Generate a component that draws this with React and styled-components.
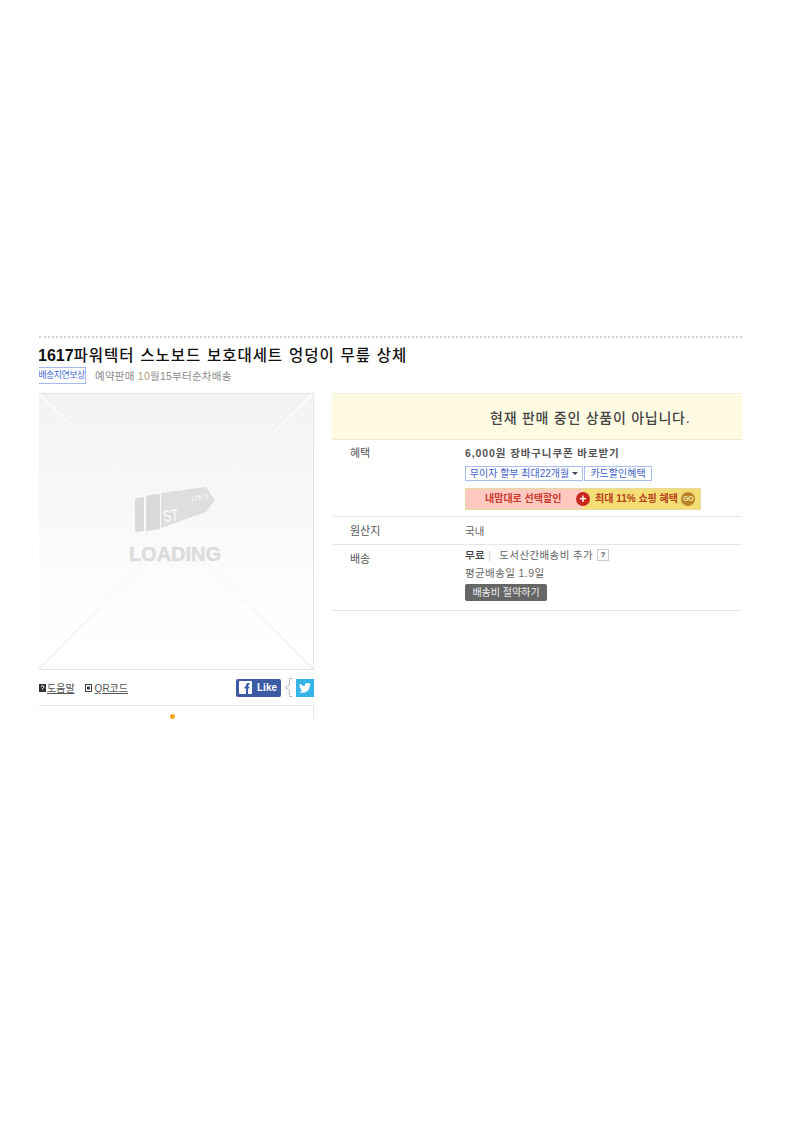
import React from 'react';
import styled, { createGlobalStyle } from 'styled-components';

const GlobalStyle = createGlobalStyle`
  html, body {
    margin: 0;
    padding: 0;
    background: #fff;
  }
  body {
    font-family: "Liberation Sans", "Noto Sans CJK KR", sans-serif;
    color: #555;
  }
`;

const Page = styled.div`
  width: 793px;
  height: 1122px;
  padding: 336px 51px 0 39px;
  box-sizing: border-box;
`;

const Frame = styled.div`
  width: 703px;
  height: 383px;
  overflow: hidden;
  border-top: 2px dotted #d0d0d0;
  box-sizing: border-box;
`;

const Title = styled.h1`
  margin: 7px 0 0 -1px;
  font-family: "DejaVu Sans", "Noto Sans CJK KR", sans-serif;
  font-size: 15.5px;
  line-height: 21px;
  font-weight: 500;
  color: #111;
  white-space: nowrap;
  letter-spacing: 0.95px;

  b {
    font-family: "Liberation Sans", sans-serif;
    font-weight: 700;
    font-size: 16px;
    letter-spacing: 0;
  }
`;

const SubRow = styled.div`
  display: flex;
  align-items: center;
  gap: 9px;
  margin-top: 0;
  height: 16px;
`;

const DelayBadge = styled.span`
  display: block;
  width: 47px;
  height: 15px;
  margin-left: -1px;
  border: 1px solid #a9b9ee;
  border-left: 0;
  font-size: 9px;
  line-height: 15px;
  text-align: center;
  color: #4a6bd8;
  white-space: nowrap;
  letter-spacing: -0.5px;
`;

const PreOrder = styled.span`
  font-size: 10.5px;
  color: #8a8a8a;
  white-space: nowrap;
  letter-spacing: 0.25px;

  em {
    font-style: normal;
    color: #b59a7c;
  }
`;

const Columns = styled.div`
  display: flex;
  align-items: flex-start;
  gap: 18px;
  margin-top: 10px;
`;

const LeftColumn = styled.div`
  width: 275px;
  flex: none;
`;

const RightColumn = styled.div`
  flex: 1;
  min-width: 0;
`;

const ImageBox = styled.div`
  position: relative;
  height: 277px;
  border: 1px solid #e4e4e4;
  border-left: 0;
  box-sizing: border-box;
  background: linear-gradient(180deg, #f3f3f3 0%, #f7f7f7 35%, #fdfdfd 75%, #fff 100%);
`;

const Cross = styled.svg`
  position: absolute;
  inset: 0;
  width: 100%;
  height: 100%;
`;

const LogoWrap = styled.div`
  position: absolute;
  left: 95px;
  top: 93px;
  width: 82px;
  display: flex;
  flex-direction: column;
  align-items: center;
`;

const LoadingText = styled.div`
  margin-top: 10px;
  font-family: "Liberation Sans", sans-serif;
  font-size: 20px;
  line-height: 22px;
  font-weight: 700;
  letter-spacing: 0;
  color: #dcdcdc;
  -webkit-text-stroke: 0.5px #dcdcdc;
  white-space: nowrap;
`;

const ToolRow = styled.div`
  display: flex;
  align-items: center;
  height: 35px;
`;

const ToolLink = styled.a`
  display: flex;
  align-items: center;
  gap: ${p => p.$gap}px;
  margin-right: 10px;
  font-size: 10px;
  color: #555;
  text-decoration: underline;
  white-space: nowrap;
`;

const ToolIcon = styled.svg`
  width: 7px;
  height: 8px;
  flex: none;
`;

const Social = styled.div`
  display: flex;
  align-items: center;
  margin-left: auto;
`;

const LikeButton = styled.div`
  display: flex;
  align-items: center;
  gap: 5px;
  width: 45px;
  height: 18px;
  padding-left: 3px;
  box-sizing: border-box;
  border-radius: 2px;
  background: #3b5ba5;
  color: #fff;
  font-size: 10px;
  font-weight: 700;
`;

const Bracket = styled.svg`
  width: 9px;
  height: 19px;
  margin: 0 3px;
  flex: none;
`;

const TweetButton = styled.div`
  display: flex;
  align-items: center;
  justify-content: center;
  width: 18px;
  height: 18px;
  background: #36b4e8;
`;

const NextBox = styled.div`
  position: relative;
  height: 30px;
  margin-top: 0;
  border-top: 1px solid #e6e6e6;
  border-right: 1px solid #e6e6e6;
`;

const OrangeDot = styled.span`
  position: absolute;
  left: 131px;
  top: 8px;
  width: 5px;
  height: 5px;
  border-radius: 50%;
  background: #f5a623;
`;

const Notice = styled.div`
  display: flex;
  align-items: center;
  height: 47px;
  padding-left: 158px;
  box-sizing: border-box;
  background: #fffbe3;
  border-top: 1px solid #f1eedd;
  border-bottom: 1px solid #efe9cf;
  font-size: 14px;
  font-weight: 500;
  color: #444;
  letter-spacing: 0.75px;
  white-space: nowrap;
`;

const InfoRow = styled.div`
  display: flex;
  padding: ${p => p.$pad};
  border-bottom: 1px solid #e6e6e6;
`;

const InfoLabel = styled.div`
  width: 133px;
  padding-left: 18px;
  padding-top: ${p => p.$top || 0}px;
  box-sizing: border-box;
  flex: none;
  font-size: 11px;
  line-height: 14px;
  color: #555;
`;

const InfoValue = styled.div`
  flex: 1;
  min-width: 0;
  font-size: 10.5px;
  line-height: 14px;
  color: #666;
`;

const CouponLine = styled.div`
  font-size: 10.5px;
  line-height: 14px;
  font-weight: 700;
  color: #555;
  letter-spacing: 0.9px;
`;

const BenefitButtons = styled.div`
  display: flex;
  gap: 1px;
  margin-top: 6px;
`;

const BenefitButton = styled.span`
  display: flex;
  align-items: center;
  justify-content: center;
  gap: 3px;
  width: ${p => p.$w}px;
  height: 15px;
  box-sizing: border-box;
  border: 1px solid #aebdf0;
  font-size: 10px;
  color: #3f62c8;
  white-space: nowrap;
`;

const Caret = styled.i`
  width: 0;
  height: 0;
  border: 3px solid transparent;
  border-top: 3px solid #445;
  border-bottom: 0;
`;

const PromoBanner = styled.div`
  position: relative;
  display: flex;
  width: 236px;
  height: 22px;
  margin-top: 7px;
  box-sizing: border-box;
  border: 1px solid #e5d9a0;
  font-size: 10px;
  font-weight: 700;
  line-height: 20px;
  color: #c8392c;
  white-space: nowrap;
`;

const PromoLeft = styled.div`
  width: 117px;
  padding-left: 19px;
  box-sizing: border-box;
  background: #ffc9c0;
`;

const PromoRight = styled.div`
  display: flex;
  align-items: center;
  gap: 3px;
  flex: 1;
  padding-left: 12px;
  background: #f3dd74;
  color: #b5401c;
`;

const PlusBadge = styled.span`
  position: absolute;
  left: 110px;
  top: 3px;
  display: flex;
  align-items: center;
  justify-content: center;
  width: 14px;
  height: 14px;
  border-radius: 50%;
  background: #c9261f;
  color: #fff;
  font-size: 12px;
  line-height: 14px;
`;

const GoBadge = styled.span`
  display: flex;
  align-items: center;
  justify-content: center;
  width: 14px;
  height: 14px;
  border-radius: 50%;
  background: #b98428;
  color: #f9e9a8;
  font-size: 7px;
  letter-spacing: -0.5px;
`;

const ShipLine = styled.div`
  display: flex;
  align-items: center;
  margin-top: ${p => p.$top || 0}px;
  white-space: nowrap;
  letter-spacing: 0.4px;

  strong {
    font-weight: 500;
    color: #444;
  }
`;

const Sep = styled.span`
  margin: 0 8px 0 3px;
  color: #ccc;
`;

const HelpBox = styled.span`
  display: flex;
  align-items: center;
  justify-content: center;
  width: 10px;
  height: 10px;
  margin-left: 4px;
  border: 1px solid #ccc;
  font-size: 8px;
  font-weight: 700;
  color: #444;
`;

const SaveButton = styled.span`
  display: block;
  width: 82px;
  height: 17px;
  margin-top: 4px;
  border-radius: 2px;
  background: #666;
  color: #eee;
  font-size: 10px;
  line-height: 17px;
  text-align: center;
  white-space: nowrap;
`;

const Logo = () => (
  <svg width="82" height="46" viewBox="0 0 82 46" aria-hidden="true">
    <path d="M1 14q0-3 3-3l6-1v34l-6 1q-3 .5-3-2z" fill="#dadada" />
    <path d="M12 10l3-2 9-1q2 0 2 2v33l-14 2z" fill="#d9d9d9" />
    <path d="M27 6L72 0l9 13-9 12-45 16z" fill="#dedede" />
    <text x="30" y="35" fontFamily="Liberation Sans" fontSize="16" fill="#fff" textLength="15" lengthAdjust="spacingAndGlyphs" transform="rotate(-8 30 35)">ST</text>
    <text x="57" y="14" fontFamily="Noto Sans CJK KR" fontSize="6" fill="#fff" transform="rotate(-8 57 14)">11번가</text>
  </svg>
);

const App = () => (
  <Page>
    <GlobalStyle />
    <Frame>
      <Title><b>1617</b>파워텍터 스노보드 보호대세트 엉덩이 무릎 상체</Title>
      <SubRow>
        <DelayBadge>배송지연보상</DelayBadge>
        <PreOrder>예약판매 <em>10</em>월15부터순차배송</PreOrder>
      </SubRow>
      <Columns>
        <LeftColumn>
          <ImageBox>
            <Cross viewBox="0 0 275 277" preserveAspectRatio="none" aria-hidden="true">
              <defs>
                <linearGradient id="crossStroke" x1="0" y1="0" x2="0" y2="1">
                  <stop offset="0" stopColor="#fdfdfd" />
                  <stop offset="0.55" stopColor="#fafafa" />
                  <stop offset="1" stopColor="#efefef" />
                </linearGradient>
              </defs>
              <path d="M0 0L137 138L0 277L137 138L275 277L137 138L275 0L137 138z" stroke="url(#crossStroke)" strokeWidth="1.5" fill="none" />
            </Cross>
            <LogoWrap>
              <Logo />
              <LoadingText>LOADING</LoadingText>
            </LogoWrap>
          </ImageBox>
          <ToolRow>
            <ToolLink $gap={1}>
              <ToolIcon viewBox="0 0 7 8" aria-hidden="true">
                <rect width="7" height="8" fill="#333" />
                <path d="M2 2.500q1.500-1.500 3 0q0 1.500-1.500 2v1" stroke="#fff" fill="none" />
              </ToolIcon>
              도움말
            </ToolLink>
            <ToolLink $gap={3}>
              <ToolIcon viewBox="0 0 7 8" aria-hidden="true">
                <rect x=".5" y=".5" width="6" height="7" fill="none" stroke="#444" />
                <rect x="2" y="2.500" width="3" height="3" fill="#444" />
              </ToolIcon>
              QR코드
            </ToolLink>
            <Social>
              <LikeButton>
                <svg width="13" height="13" viewBox="0 0 13 13" aria-hidden="true">
                  <rect width="13" height="13" rx="1" fill="#fff" />
                  <path d="M7 13V7.500H5.500V5.500H7V4q0-2 2-2h1.500v2H9.500q-.5 0-.5.500v1h1.500L10.200 7.500H9V13z" fill="#3b5ba5" />
                </svg>
                Like
              </LikeButton>
              <Bracket viewBox="0 0 9 19" aria-hidden="true">
                <path d="M8.500.5H5.500V7L1 9.500 5.500 12v6.500h3" stroke="#bbb" fill="#fff" />
              </Bracket>
              <TweetButton>
                <svg width="12" height="10" viewBox="0 0 24 20" aria-hidden="true">
                  <path d="M24 2.400a10 10 0 0 1-2.800.8A5 5 0 0 0 23.300.5a10 10 0 0 1-3.100 1.200 4.900 4.900 0 0 0-8.400 4.500A14 14 0 0 1 1.700.9a4.900 4.900 0 0 0 1.500 6.600 5 5 0 0 1-2.200-.6 4.900 4.900 0 0 0 3.900 4.900 5 5 0 0 1-2.200.1 4.900 4.900 0 0 0 4.600 3.400A10 10 0 0 1 0 17.300 14 14 0 0 0 21.500 5a10 10 0 0 0 2.500-2.600z" fill="#fff" />
                </svg>
              </TweetButton>
            </Social>
          </ToolRow>
          <NextBox><OrangeDot /></NextBox>
        </LeftColumn>
        <RightColumn>
          <Notice>현재 판매 중인 상품이 아닙니다.</Notice>
          <InfoRow $pad="6px 0 6px">
            <InfoLabel>혜택</InfoLabel>
            <InfoValue>
              <CouponLine>6,000원 장바구니쿠폰 바로받기</CouponLine>
              <BenefitButtons>
                <BenefitButton $w={118}>무이자 할부 최대22개월<Caret /></BenefitButton>
                <BenefitButton $w={68}>카드할인혜택</BenefitButton>
              </BenefitButtons>
              <PromoBanner>
                <PromoLeft>내맘대로 선택할인</PromoLeft>
                <PlusBadge>+</PlusBadge>
                <PromoRight>최대 11% 쇼핑 혜택<GoBadge>GO</GoBadge></PromoRight>
              </PromoBanner>
            </InfoValue>
          </InfoRow>
          <InfoRow $pad="7px 0 6px">
            <InfoLabel>원산지</InfoLabel>
            <InfoValue>국내</InfoValue>
          </InfoRow>
          <InfoRow $pad="3px 0 9px">
            <InfoLabel $top={4}>배송</InfoLabel>
            <InfoValue>
              <ShipLine>
                <strong>무료</strong><Sep>|</Sep>도서산간배송비 추가<HelpBox>?</HelpBox>
              </ShipLine>
              <ShipLine $top={4}>평균배송일 1.9일</ShipLine>
              <SaveButton>배송비 절약하기</SaveButton>
            </InfoValue>
          </InfoRow>
        </RightColumn>
      </Columns>
    </Frame>
  </Page>
);

export default App;
